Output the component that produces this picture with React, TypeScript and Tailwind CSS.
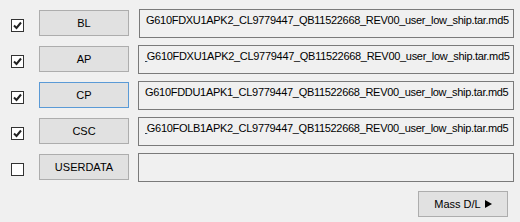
import React from "react";

type Row = { label: string; checked: boolean; path: string; focused?: boolean; lead?: boolean; shift?: number };

const rows: Row[] = [
  { label: "BL", checked: true, path: "G610FDXU1APK2_CL9779447_QB11522668_REV00_user_low_ship.tar.md5", shift: 1 },
  { label: "AP", checked: true, path: "_G610FDXU1APK2_CL9779447_QB11522668_REV00_user_low_ship.tar.md5", lead: true },
  { label: "CP", checked: true, path: "G610FDDU1APK1_CL9779447_QB11522668_REV00_user_low_ship.tar.md5", focused: true },
  { label: "CSC", checked: true, path: "_G610FOLB1APK2_CL9779447_QB11522668_REV00_user_low_ship.tar.md5", lead: true },
  { label: "USERDATA", checked: false, path: "" },
];

function CheckBox({ checked }: { checked: boolean }) {
  return (
    <div className="w-[13px] h-[13px] border border-[#333333] bg-white flex items-center justify-center">
      {checked && (
        <svg width="9" height="9" viewBox="0 0 9 9">
          <path d="M1 4.5 L3.5 7 L8 1.5" fill="none" stroke="#222" strokeWidth="2" />
        </svg>
      )}
    </div>
  );
}

export default function App() {
  return (
    <div
      className="w-[520px] h-[222px] bg-[#f0f0f0] text-black text-[11px] overflow-hidden"
      style={{ fontFamily: '"Liberation Sans", Arial, sans-serif' }}
    >
      <div className="flex flex-col gap-[7px] pt-[9px]">
        {rows.map((r) => (
          <div key={r.label} className="flex h-[29px]">
            <div className="w-[39px] pl-[11px] pt-[10px]">
              <CheckBox checked={r.checked} />
            </div>
            <div className="pt-[1px]">
              <button
                className={
                  "w-[90px] h-[26px] bg-[#e1e1e1] border flex items-center justify-center " +
                  (r.focused ? "border-[#5a9ad6]" : "border-[#adadad]")
                }
              >
                {r.label}
              </button>
            </div>
            <div
              className="h-[29px] border border-[#7a7a7a] pl-[6px]"
              style={{ marginLeft: 9 + (r.shift ?? 0), width: 376 - (r.shift ?? 0) }}
            >
              <div className="pt-[2px] whitespace-nowrap overflow-hidden tracking-[-0.3px]">
                <span className={r.lead ? "ml-[-4px] inline-block" : "inline-block"}>{r.path}</span>
              </div>
            </div>
          </div>
        ))}
      </div>
      <div className="flex justify-end pr-[12px] pt-[9px]">
        <button className="w-[90px] h-[26px] bg-[#e1e1e1] border border-[#adadad] flex items-center justify-center gap-[4px]">
          <span>Mass D/L</span>
          <svg width="7" height="8" viewBox="0 0 7 8">
            <path d="M0 0 L7 4 L0 8 Z" fill="#000" />
          </svg>
        </button>
      </div>
    </div>
  );
}
